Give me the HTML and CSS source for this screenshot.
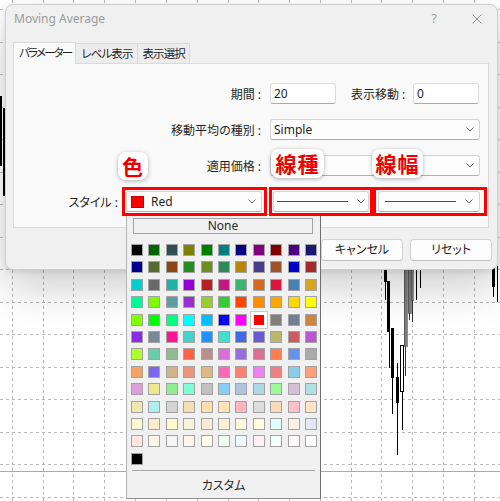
FILE: index.html
```html
<!DOCTYPE html>
<html lang="ja">
<head>
<meta charset="utf-8">
<title>Moving Average</title>
<link rel="stylesheet" href="styles.css">
</head>
<body>
<div class="screen">
  <svg class="chart" width="500" height="501" viewBox="0 0 500 501">
    <g class="grid-lines" stroke="#b9b9b9" stroke-width="1" stroke-dasharray="3 3" shape-rendering="crispEdges">
      <line x1="12.5" y1="0" x2="12.5" y2="501"/>
      <line x1="43.5" y1="0" x2="43.5" y2="501"/>
      <line x1="73.5" y1="0" x2="73.5" y2="501"/>
      <line x1="104.5" y1="0" x2="104.5" y2="501"/>
      <line x1="135.5" y1="0" x2="135.5" y2="501"/>
      <line x1="166.5" y1="0" x2="166.5" y2="501"/>
      <line x1="197.5" y1="0" x2="197.5" y2="501"/>
      <line x1="228.5" y1="0" x2="228.5" y2="501"/>
      <line x1="258.5" y1="0" x2="258.5" y2="501"/>
      <line x1="289.5" y1="0" x2="289.5" y2="501"/>
      <line x1="320.5" y1="0" x2="320.5" y2="501"/>
      <line x1="351.5" y1="0" x2="351.5" y2="501"/>
      <line x1="381.5" y1="0" x2="381.5" y2="501"/>
      <line x1="412.5" y1="0" x2="412.5" y2="501"/>
      <line x1="443.5" y1="0" x2="443.5" y2="501"/>
      <line x1="474.5" y1="0" x2="474.5" y2="501"/>
      <line x1="0" y1="9.5" x2="500" y2="9.5"/>
      <line x1="0" y1="42.5" x2="500" y2="42.5"/>
      <line x1="0" y1="74.5" x2="500" y2="74.5"/>
      <line x1="0" y1="107.5" x2="500" y2="107.5"/>
      <line x1="0" y1="139.5" x2="500" y2="139.5"/>
      <line x1="0" y1="172.5" x2="500" y2="172.5"/>
      <line x1="0" y1="204.5" x2="500" y2="204.5"/>
      <line x1="0" y1="237.5" x2="500" y2="237.5"/>
      <line x1="0" y1="269.5" x2="500" y2="269.5"/>
      <line x1="0" y1="302.5" x2="500" y2="302.5"/>
      <line x1="0" y1="334.5" x2="500" y2="334.5"/>
      <line x1="0" y1="367.5" x2="500" y2="367.5"/>
      <line x1="0" y1="399.5" x2="500" y2="399.5"/>
      <line x1="0" y1="432.5" x2="500" y2="432.5"/>
      <line x1="0" y1="464.5" x2="500" y2="464.5"/>
      <line x1="0" y1="497.5" x2="500" y2="497.5"/>
    </g>
    <line x1="0" y1="471.5" x2="500" y2="471.5" stroke="#a9a9a9" shape-rendering="crispEdges"/>
    <g class="candles" fill="#000" shape-rendering="crispEdges">
      <rect x="0" y="96" width="2" height="70"/>
      <rect x="3" y="108" width="2" height="88"/>
      <rect x="320" y="266" width="1" height="84" fill="#333"/>
      <rect x="384" y="266" width="3" height="16"/>
      <rect x="385" y="282" width="1" height="18"/>
      <rect x="387" y="281" width="3" height="51"/>
      <rect x="389" y="300" width="1" height="68"/>
      <rect x="391" y="328" width="3" height="50"/>
      <rect x="392" y="378" width="1" height="36"/>
      <rect x="397" y="363" width="1" height="92"/>
      <rect x="396" y="377" width="3" height="26"/>
      <rect x="402" y="391" width="1" height="39"/>
      <rect x="400.5" y="345.5" width="3" height="46" fill="#fff" stroke="#000" stroke-width="1"/>
      <rect x="405" y="346" width="1" height="30" fill="#333"/>
      <rect x="404" y="266" width="3" height="80" fill="#7d7d7d" stroke="#444" stroke-width="0.6"/>
      <rect x="409" y="313" width="1" height="7" fill="#333"/>
      <rect x="408" y="266" width="3" height="47" fill="#7d7d7d" stroke="#444" stroke-width="0.6"/>
      <rect x="412" y="300" width="1" height="22" fill="#333"/>
      <rect x="411" y="266" width="2" height="34" fill="#7d7d7d" stroke="#444" stroke-width="0.6"/>
      <rect x="416" y="266" width="1" height="34"/>
      <rect x="420" y="266" width="1" height="22"/>
      <rect x="492" y="266" width="3" height="21"/>
      <rect x="493" y="287" width="1" height="10"/>
      <rect x="497" y="266" width="1" height="36"/>
    </g>
  </svg>

  <div class="dialog">
    <div class="titlebar">
      <span class="title">Moving Average</span>
      <span class="help">?</span>
      <span class="close">
        <svg width="10" height="10" viewBox="0 0 10 10"><path d="M0.5 0.5 L9.5 9.5 M9.5 0.5 L0.5 9.5" stroke="#8f8f8f" stroke-width="1" fill="none"/></svg>
      </span>
    </div>
    <div class="tabs">
      <div class="tab active">パラメーター</div>
      <div class="tab">レベル表示</div>
      <div class="tab">表示選択</div>
    </div>
    <div class="panel">
      <div class="row">
        <span class="lbl">期間 :</span>
        <span class="field short">20</span>
        <span class="lbl2">表示移動 :</span>
        <span class="field short">0</span>
      </div>
      <div class="row">
        <span class="lbl">移動平均の種別 :</span>
        <span class="field combo wide"><span class="val">Simple</span><svg class="chev" width="8" height="5" viewBox="0 0 8 5"><path d="M0.5 0.5 L4 4 L7.5 0.5" stroke="#666" fill="none"/></svg></span>
      </div>
      <div class="row">
        <span class="lbl">適用価格 :</span>
        <span class="field combo wide"><span class="val"></span><svg class="chev" width="8" height="5" viewBox="0 0 8 5"><path d="M0.5 0.5 L4 4 L7.5 0.5" stroke="#666" fill="none"/></svg></span>
      </div>
      <div class="row">
        <span class="style-lbl">スタイル :</span>
        <span class="field combo color-combo"><span class="red-sw"></span><span class="val">Red</span><svg class="chev" width="8" height="5" viewBox="0 0 8 5"><path d="M0.5 0.5 L4 4 L7.5 0.5" stroke="#666" fill="none"/></svg></span>
        <span class="field combo line-combo"><span class="line-sample"></span><svg class="chev" width="8" height="5" viewBox="0 0 8 5"><path d="M0.5 0.5 L4 4 L7.5 0.5" stroke="#666" fill="none"/></svg></span>
        <span class="field combo width-combo"><span class="line-sample"></span><svg class="chev" width="8" height="5" viewBox="0 0 8 5"><path d="M0.5 0.5 L4 4 L7.5 0.5" stroke="#666" fill="none"/></svg></span>
      </div>
    </div>
    <div class="buttons">
      <button class="btn">OK</button>
      <button class="btn">キャンセル</button>
      <button class="btn">リセット</button>
    </div>
  </div>

  <div class="popup">
    <div class="none-btn">None</div>
    <div class="swatches">
      <span class="sw" style="background:#000000"></span><span class="sw" style="background:#006400"></span><span class="sw" style="background:#2F4F4F"></span><span class="sw" style="background:#808000"></span><span class="sw" style="background:#008000"></span><span class="sw" style="background:#008080"></span><span class="sw" style="background:#000080"></span><span class="sw" style="background:#800080"></span><span class="sw" style="background:#800000"></span><span class="sw" style="background:#4B0082"></span><span class="sw" style="background:#191970"></span>
      <span class="sw" style="background:#00008B"></span><span class="sw" style="background:#556B2F"></span><span class="sw" style="background:#8B4513"></span><span class="sw" style="background:#228B22"></span><span class="sw" style="background:#6B8E23"></span><span class="sw" style="background:#2E8B57"></span><span class="sw" style="background:#B8860B"></span><span class="sw" style="background:#483D8B"></span><span class="sw" style="background:#A0522D"></span><span class="sw" style="background:#0000CD"></span><span class="sw" style="background:#A52A2A"></span>
      <span class="sw" style="background:#00CED1"></span><span class="sw" style="background:#696969"></span><span class="sw" style="background:#20B2AA"></span><span class="sw" style="background:#9400D3"></span><span class="sw" style="background:#B22222"></span><span class="sw" style="background:#C71585"></span><span class="sw" style="background:#3CB371"></span><span class="sw" style="background:#D2691E"></span><span class="sw" style="background:#DC143C"></span><span class="sw" style="background:#4682B4"></span><span class="sw" style="background:#DAA520"></span>
      <span class="sw" style="background:#00FA9A"></span><span class="sw" style="background:#7CFC00"></span><span class="sw" style="background:#5F9EA0"></span><span class="sw" style="background:#9932CC"></span><span class="sw" style="background:#9ACD32"></span><span class="sw" style="background:#32CD32"></span><span class="sw" style="background:#FF4500"></span><span class="sw" style="background:#FF8C00"></span><span class="sw" style="background:#FFA500"></span><span class="sw" style="background:#FFD700"></span><span class="sw" style="background:#FFFF00"></span>
      <span class="sw" style="background:#7FFF00"></span><span class="sw" style="background:#00FF00"></span><span class="sw" style="background:#00FF7F"></span><span class="sw" style="background:#00FFFF"></span><span class="sw" style="background:#00BFFF"></span><span class="sw" style="background:#0000FF"></span><span class="sw" style="background:#FF00FF"></span><span class="sw sel" style="background:#FF0000"></span><span class="sw" style="background:#808080"></span><span class="sw" style="background:#708090"></span><span class="sw" style="background:#CD853F"></span>
      <span class="sw" style="background:#8A2BE2"></span><span class="sw" style="background:#778899"></span><span class="sw" style="background:#FF1493"></span><span class="sw" style="background:#48D1CC"></span><span class="sw" style="background:#1E90FF"></span><span class="sw" style="background:#40E0D0"></span><span class="sw" style="background:#4169E1"></span><span class="sw" style="background:#6A5ACD"></span><span class="sw" style="background:#BDB76B"></span><span class="sw" style="background:#CD5C5C"></span><span class="sw" style="background:#BA55D3"></span>
      <span class="sw" style="background:#ADFF2F"></span><span class="sw" style="background:#66CDAA"></span><span class="sw" style="background:#8FBC8F"></span><span class="sw" style="background:#FF6347"></span><span class="sw" style="background:#BC8F8F"></span><span class="sw" style="background:#DA70D6"></span><span class="sw" style="background:#9370DB"></span><span class="sw" style="background:#DB7093"></span><span class="sw" style="background:#FF7F50"></span><span class="sw" style="background:#6495ED"></span><span class="sw" style="background:#A9A9A9"></span>
      <span class="sw" style="background:#F4A460"></span><span class="sw" style="background:#7B68EE"></span><span class="sw" style="background:#D2B48C"></span><span class="sw" style="background:#E9967A"></span><span class="sw" style="background:#DEB887"></span><span class="sw" style="background:#FF69B4"></span><span class="sw" style="background:#FA8072"></span><span class="sw" style="background:#EE82EE"></span><span class="sw" style="background:#F08080"></span><span class="sw" style="background:#87CEEB"></span><span class="sw" style="background:#FFA07A"></span>
      <span class="sw" style="background:#DDA0DD"></span><span class="sw" style="background:#F0E68C"></span><span class="sw" style="background:#90EE90"></span><span class="sw" style="background:#7FFFD4"></span><span class="sw" style="background:#C0C0C0"></span><span class="sw" style="background:#87CEFA"></span><span class="sw" style="background:#B0C4DE"></span><span class="sw" style="background:#ADD8E6"></span><span class="sw" style="background:#98FB98"></span><span class="sw" style="background:#D8BFD8"></span><span class="sw" style="background:#B0E0E6"></span>
      <span class="sw" style="background:#EEE8AA"></span><span class="sw" style="background:#AFEEEE"></span><span class="sw" style="background:#D3D3D3"></span><span class="sw" style="background:#F5DEB3"></span><span class="sw" style="background:#FFDEAD"></span><span class="sw" style="background:#FFE4B5"></span><span class="sw" style="background:#FFB6C1"></span><span class="sw" style="background:#DCDCDC"></span><span class="sw" style="background:#FFDAB9"></span><span class="sw" style="background:#FFC0CB"></span><span class="sw" style="background:#FFE4C4"></span>
      <span class="sw" style="background:#FAFAD2"></span><span class="sw" style="background:#FFEBCD"></span><span class="sw" style="background:#FFFACD"></span><span class="sw" style="background:#F5F5DC"></span><span class="sw" style="background:#FAEBD7"></span><span class="sw" style="background:#FFEFD5"></span><span class="sw" style="background:#FFF8DC"></span><span class="sw" style="background:#FFFFE0"></span><span class="sw" style="background:#E0FFFF"></span><span class="sw" style="background:#FAF0E6"></span><span class="sw" style="background:#E6E6FA"></span>
      <span class="sw" style="background:#FFE4E1"></span><span class="sw" style="background:#FDF5E6"></span><span class="sw" style="background:#F5F5F5"></span><span class="sw" style="background:#FFF5EE"></span><span class="sw" style="background:#FFFFF0"></span><span class="sw" style="background:#F0FFF0"></span><span class="sw" style="background:#F0F8FF"></span><span class="sw" style="background:#FFF0F5"></span><span class="sw" style="background:#F5FFFA"></span><span class="sw" style="background:#FFFAFA"></span><span class="sw" style="background:#FFFFFF"></span>
      <span class="sw" style="background:#000000"></span>
    </div>
    <div class="sep"></div>
    <div class="custom">カスタム</div>
  </div>

  <div class="frame frame-color"></div>
  <div class="frame frame-type"></div>
  <div class="frame frame-width"></div>

  <div class="callout callout-color">色</div>
  <div class="callout callout-type">線種</div>
  <div class="callout callout-width">線幅</div>
</div>
</body>
</html>
```

FILE: styles.css
```css
html, body {
  margin: 0;
  padding: 0;
  background: #fff;
}

body {
  font-family: "Noto Sans", "Noto Sans CJK JP", sans-serif;
  font-feature-settings: "palt";
  font-size: 12px;
  color: #1f1f1f;
}

.screen {
  position: relative;
  width: 500px;
  height: 501px;
  overflow: hidden;
  background: #fff;
}

.chart {
  position: absolute;
  left: 0;
  top: 0;
  display: block;
}

/* ---------- dialog ---------- */
.dialog {
  position: absolute;
  left: 5px;
  top: 4px;
  width: 493px;
  height: 266px;
  box-sizing: border-box;
  border: 1px solid #cfcfcf;
  border-radius: 8px;
  background: #f0f0f0;
  box-shadow: 0 20px 40px rgba(0, 0, 0, 0.18), 0 2px 6px rgba(0, 0, 0, 0.1);
  display: flex;
  flex-direction: column;
}

.titlebar {
  height: 37px;
  box-sizing: border-box;
  padding: 6px 0 0 8px;
  display: flex;
  align-items: flex-start;
  color: #9b9b9b;
  line-height: 16px;
}

.title {
  flex: 1;
  font-size: 12px;
}

.help {
  width: 10px;
  text-align: center;
  font-size: 12px;
  margin-right: 33px;
}

.close {
  width: 10px;
  height: 10px;
  margin-top: 3px;
  margin-right: 15px;
  display: flex;
}

.tabs {
  display: flex;
  align-items: flex-end;
  height: 21px;
  margin-left: 7px;
}

.tab {
  height: 20px;
  box-sizing: border-box;
  border: 1px solid #d9d9d9;
  border-left: none;
  border-bottom: none;
  background: #ececec;
  line-height: 19px;
  padding: 0 4px 0 5px;
  font-size: 11.5px;
  letter-spacing: -0.9px;
  white-space: nowrap;
  color: #1f1f1f;
}

.tab.active {
  height: 22px;
  margin-bottom: -1px;
  border-left: 1px solid #d9d9d9;
  background: #f9f9f9;
  position: relative;
  z-index: 1;
  line-height: 20px;
  letter-spacing: -1.8px;
  padding: 0 4px 0 5px;
}

.panel {
  height: 165px;
  box-sizing: border-box;
  margin: 0 8px 0 7px;
  border: 1px solid #dadada;
  background: #f9f9f9;
  padding-top: 19px;
}

.row {
  display: flex;
  align-items: center;
  height: 21px;
}

.row + .row {
  margin-top: 15px;
}

.lbl {
  width: 247px;
  margin-right: 9px;
  text-align: right;
  white-space: nowrap;
}

.lbl2 {
  width: 54px;
  margin-left: 15px;
  margin-right: 8px;
  text-align: right;
  white-space: nowrap;
}

.style-lbl {
  width: 104px;
  margin-right: 8px;
  text-align: right;
  white-space: nowrap;
}

.field {
  height: 21px;
  box-sizing: border-box;
  border: 1px solid #dcdcdc;
  border-bottom-color: #a9a9a9;
  border-radius: 3px;
  background: #fff;
  padding-left: 3px;
  display: flex;
  align-items: center;
  line-height: 19px;
}

.short {
  width: 66px;
}

.combo {
  background: #fdfdfd;
  border-color: #d4d4d4;
  border-bottom-color: #b0b0b0;
}

.val {
  flex: 1;
}

.chev {
  display: block;
  margin-right: 5px;
}

.wide {
  width: 210px;
}

.color-combo {
  width: 136px;
  padding-left: 4px;
}

.red-sw {
  width: 13px;
  height: 12px;
  box-sizing: border-box;
  background: #ff0000;
  border: 1px solid #c40000;
  margin-right: 7px;
}

.line-combo {
  width: 96px;
  margin-left: 11px;
}

.width-combo {
  width: 102px;
  margin-left: 9px;
  padding-left: 6px;
}

.line-sample {
  flex: none;
  width: 71px;
  height: 1px;
  border-top: 1px solid #4a4a4a;
  margin-right: auto;
}

.line-combo .chev {
  margin-right: 3px;
}

.width-combo .chev {
  margin-right: 6px;
}

.buttons {
  display: flex;
  justify-content: flex-end;
  gap: 7px;
  margin-top: 11px;
  padding-right: 5px;
}

.btn {
  width: 82px;
  height: 22px;
  box-sizing: border-box;
  border: 1px solid #d2d2d2;
  border-bottom-color: #bdbdbd;
  border-radius: 4px;
  background: #fdfdfd;
  font-family: "Noto Sans", "Noto Sans CJK JP", sans-serif;
  font-feature-settings: "palt";
  font-size: 12px;
  color: #1f1f1f;
  padding: 0;
  line-height: 20px;
}

/* ---------- colour popup ---------- */
.popup {
  position: absolute;
  left: 126px;
  top: 214px;
  width: 195px;
  height: 285px;
  box-sizing: border-box;
  background: #f0f0f0;
  border: 1px solid #b4b4b4;
  border-right-color: #6f6f6f;
  border-bottom-color: #8a8a8a;
  padding-top: 3px;
  display: flex;
  flex-direction: column;
}

.none-btn {
  width: 180px;
  height: 16px;
  box-sizing: border-box;
  margin-left: 6px;
  border: 1px solid #a3a3a3;
  text-align: center;
  line-height: 14px;
  font-size: 12px;
  color: #2b2b2b;
}

.swatches {
  margin: 10px 0 0 4px;
  display: grid;
  grid-template-columns: repeat(11, 12px);
  grid-auto-rows: 12px;
  gap: 5.4px;
}

.sw {
  display: block;
  box-sizing: border-box;
  border: 1px solid #a3a3a3;
}

.sw.sel {
  border-color: #fff;
  box-shadow: 0 0 0 2px #fff, 0 0 0 3px #c9c9c9;
}

.sep {
  height: 1px;
  width: 183px;
  margin: 5px 0 0 5px;
  background: #a6a6a6;
}

.custom {
  margin-top: 7px;
  text-align: center;
  line-height: 16px;
  font-size: 12px;
  color: #2b2b2b;
}

/* ---------- annotations ---------- */
.frame {
  position: absolute;
  box-sizing: border-box;
  border: 3px solid #ff0000;
}

.frame-color {
  left: 122px;
  top: 187px;
  width: 145px;
  height: 29px;
}

.frame-type {
  left: 269px;
  top: 187px;
  width: 104px;
  height: 29px;
}

.frame-width {
  left: 373px;
  top: 187px;
  width: 114px;
  height: 29px;
}

.callout {
  position: absolute;
  box-sizing: border-box;
  background: #fff;
  border-radius: 8px;
  box-shadow: 0 1px 4px rgba(0, 0, 0, 0.3);
  color: #ee0000;
  font-family: "Noto Sans CJK JP", sans-serif;
  font-weight: 700;
  font-size: 21px;
  line-height: 28px;
  text-align: center;
  letter-spacing: 1px;
}

.callout-color {
  left: 118px;
  top: 152px;
  width: 30px;
  height: 28px;
}

.callout-type {
  left: 271px;
  top: 149px;
  width: 53px;
  height: 29px;
}

.callout-width {
  left: 372px;
  top: 149px;
  width: 51px;
  height: 29px;
}
```
